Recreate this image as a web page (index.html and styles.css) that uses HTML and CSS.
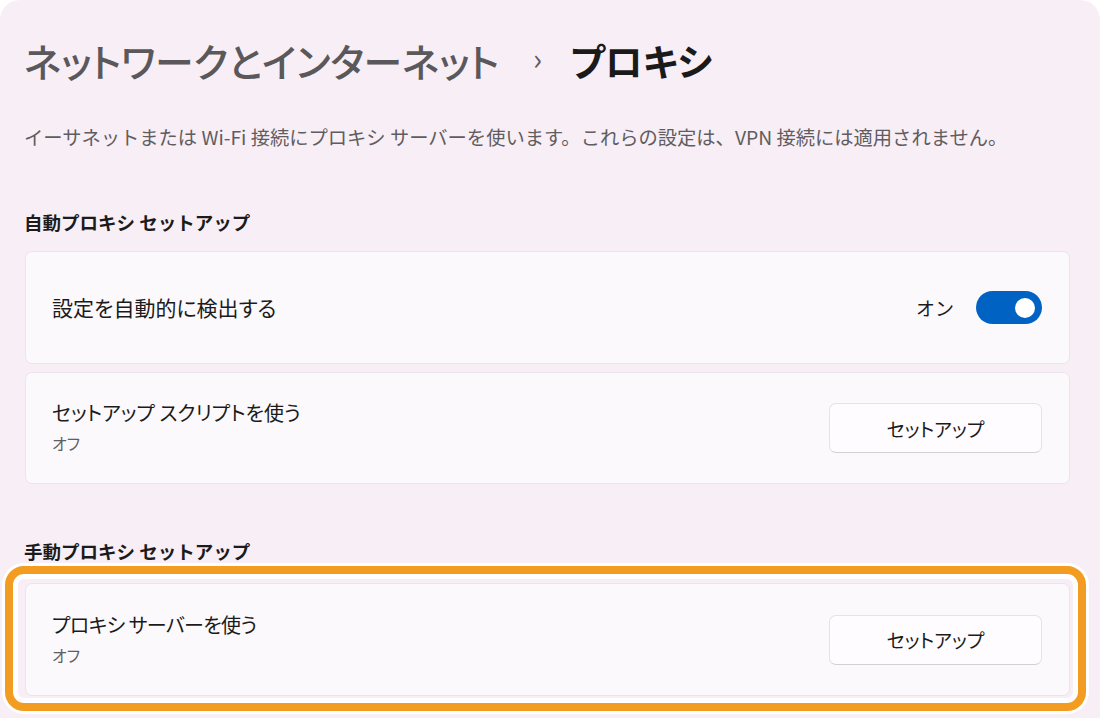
FILE: index.html
```html
<!DOCTYPE html>
<html lang="ja">
<head>
<meta charset="utf-8">
<link rel="stylesheet" href="styles.css">
</head>
<body>
<div class="window">
  <h1 class="title"><span class="crumb">ネットワークとインターネット</span><span class="chev">›</span><span class="current">プロキシ</span></h1>
  <p class="desc">イーサネットまたは Wi-Fi 接続にプロキシ サーバーを使います。これらの設定は、VPN 接続には適用されません。</p>

  <h2 class="section">自動プロキシ セットアップ</h2>
  <div class="cards">
    <div class="card card-a">
      <div class="label"><div class="name name-kanji">設定を自動的に検出する</div></div>
      <div class="control">
        <span class="state">オン</span>
        <span class="toggle"><span class="knob"></span></span>
      </div>
    </div>
    <div class="card">
      <div class="label">
        <div class="name">セットアップ スクリプトを使う</div>
        <div class="sub">オフ</div>
      </div>
      <button class="btn">セットアップ</button>
    </div>
  </div>

  <h2 class="section section-2">手動プロキシ セットアップ</h2>
  <div class="highlight">
    <div class="card card-a">
      <div class="label">
        <div class="name name-narrow">プロキシ サーバーを使う</div>
        <div class="sub">オフ</div>
      </div>
      <button class="btn">セットアップ</button>
    </div>
  </div>
</div>
</body>
</html>
```
FILE: styles.css
```css
* { box-sizing: border-box; }
html, body {
  margin: 0;
  background: #ffffff;
}
body {
  font-family: "Noto Sans CJK JP", "Noto Sans", sans-serif;
  color: #1b1b1b;
  overflow: hidden;
}
.window {
  width: 1100px;
  height: 718px;
  background: #f8eef6;
  border-radius: 20px 20px 0 0;
  padding: 0 30px 0 24px;
}
.title {
  margin: 0;
  height: 120px;
  line-height: 120px;
  font-size: 38.8px;
  font-weight: 500;
  font-feature-settings: "palt";
  display: flex;
  align-items: center;
}
.crumb {
  color: #5a585a;
  letter-spacing: -0.2px;
}
.chev {
  color: #5f5c5f;
  font-size: 30px;
  font-weight: 400;
  margin: 0 28px 0 34px;
  position: relative;
  top: -3px;
}
.current {
  color: #1a1a1a;
  font-weight: 700;
  font-size: 37.5px;
}
.desc {
  margin: 0;
  line-height: 34px;
  font-size: 19.3px;
  color: #5f5d5f;
}
.section {
  margin: 51px 0 0 0;
  line-height: 34px;
  font-size: 18.5px;
  font-weight: 700;
  color: #1b1b1b;
}
.section-2 {
  margin-top: 50px;
}
.cards {
  margin-top: 12px;
  margin-left: 1px;
  display: flex;
  flex-direction: column;
  gap: 8px;
}
.card {
  height: 112px;
  background: #fcf9fc;
  border: 1px solid #ebe4ea;
  border-radius: 7px;
  display: flex;
  align-items: center;
  justify-content: space-between;
  padding: 0 27px 0 26px;
}
.card-a { height: 113px; }
.name {
  font-size: 20px;
  line-height: 31px;
  color: #1b1b1b;
  font-feature-settings: "palt";
}
.name-kanji {
  font-size: 21px;
}
.name-narrow {
  letter-spacing: -0.6px;
}
.sub {
  font-size: 16px;
  line-height: 31px;
  color: #606060;
  font-feature-settings: "palt";
}
.control {
  display: flex;
  align-items: center;
  gap: 22px;
}
.state {
  font-size: 19px;
  color: #1b1b1b;
}
.toggle {
  width: 66px;
  height: 33px;
  border-radius: 17px;
  background: #0063c3;
  display: flex;
  align-items: center;
  justify-content: flex-end;
  padding-right: 7px;
}
.knob {
  width: 20px;
  height: 20px;
  border-radius: 50%;
  background: #ffffff;
}
.btn {
  width: 213px;
  height: 50px;
  background: #fefcfe;
  border: 1px solid #e7e2e6;
  border-bottom-color: #d5cfd4;
  border-radius: 7px;
  font-family: inherit;
  font-size: 19px;
  color: #1b1b1b;
  font-feature-settings: "palt";
  padding: 0;
}
.highlight {
  margin-top: 15px;
  margin-left: 1px;
  position: relative;
}
.highlight::after {
  content: "";
  position: absolute;
  top: -17px;
  left: -20px;
  right: -16px;
  bottom: -15px;
  border: 8px solid #f39c22;
  border-radius: 19px;
  box-shadow: 0 0 0 3px #ffffff, inset 0 0 0 5px #ffffff;
  pointer-events: none;
}
```
